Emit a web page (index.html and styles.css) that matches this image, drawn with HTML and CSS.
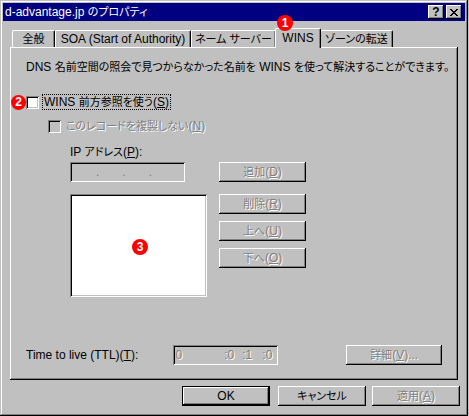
FILE: index.html
```html
<!DOCTYPE html>
<html lang="ja">
<head>
<meta charset="utf-8">
<title>d-advantage.jp のプロパティ</title>
<link rel="stylesheet" href="styles.css">
</head>
<body>
<div class="window">
  <div class="titlebar">
    <span class="title">d-advantage.jp <span class="j">のプロパティ</span></span>
    <span class="tbtn help">?</span>
    <span class="tbtn close"><svg width="8" height="7" viewBox="0 0 8 7"><path d="M0 0h2v1h1v1h2V1h1V0h2v1H7v1H6v1H5v1h1v1h1v1h1v1H6V6H5V5H3v1H2v1H0V6h1V5h1V4h1V3H2V2H1V1H0z" fill="#000"/></svg></span>
  </div>
  <div class="body">
    <div class="tabs">
      <div class="tab w-general"><span class="j">全般</span></div>
      <div class="tab w-soa">SOA (Start of Authority)</div>
      <div class="tab w-ns"><span class="j">ネーム サーバー</span></div>
      <div class="tab active w-wins">WINS</div>
      <div class="tab w-zone"><span class="j">ゾーンの転送</span></div>
    </div>
    <div class="panel">
      <p class="desc">DNS <span class="j">名前空間の照会で見つからなかった名前を</span> WINS <span class="j">を使って解決することができます。</span></p>
      <div class="check-row">
        <span class="checkbox"></span>
        <span class="label focus">WINS <span class="j">前方参照を使う</span>(<u>S</u>)</span>
      </div>
      <div class="check-row sub">
        <span class="checkbox disabled"></span>
        <span class="label dis"><span class="j">このレコードを複製しない</span>(<u>N</u>)</span>
      </div>
      <div class="ip-label">IP <span class="j">アドレス</span>(<u>P</u>):</div>
      <div class="ip-grid">
        <div class="field ip"><span>.</span><span>.</span><span>.</span></div>
        <div class="btn dis"><span class="j">追加</span>(<u>D</u>)</div>
        <div class="listbox"></div>
        <div class="btn-col">
          <div class="btn dis"><span class="j">削除</span>(<u>R</u>)</div>
          <div class="btn dis"><span class="j">上へ</span>(<u>U</u>)</div>
          <div class="btn dis"><span class="j">下へ</span>(<u>O</u>)</div>
        </div>
      </div>
      <div class="ttl-row">
        <span class="ttl-label">Time to live (TTL)(<u>T</u>):</span>
        <div class="field ttl dis"><span class="d0">0</span><span class="d1">:0</span><span class="d2">:1</span><span class="d3">:0</span></div>
        <div class="btn dis wide"><span class="j">詳細</span>(<u>V</u>)...</div>
      </div>
    </div>
    <div class="footer">
      <div class="btn default">OK</div>
      <div class="btn"><span class="j">キャンセル</span></div>
      <div class="btn dis"><span class="j">適用</span>(<u>A</u>)</div>
    </div>
  </div>
  <span class="marker m1">1</span>
  <span class="marker m2">2</span>
  <span class="marker m3">3</span>
</div>
</body>
</html>
```

FILE: styles.css
```css
* { box-sizing: border-box; }
html, body { margin: 0; padding: 0; background: #c0c0c0; }
body {
  font-family: "Liberation Sans", "Noto Sans CJK JP", sans-serif;
  font-size: 12px;
  font-feature-settings: "palt";
  color: #000;
}
.j { font-size: 11px; }
u { text-decoration: underline; text-underline-offset: 1px; }

.window {
  position: relative;
  width: 468px;
  height: 416px;
  padding: 3px;
  background: #c0c0c0;
  box-shadow: inset -1px -1px #000, inset 1px 1px #c0c0c0, inset -2px -2px #808080, inset 2px 2px #fff;
  display: flex;
  flex-direction: column;
}

.titlebar {
  height: 18px;
  background: #000080;
  color: #fff;
  display: flex;
  align-items: center;
  padding: 0 3px 0 2px;
  gap: 2px;
}
.title { flex: 1; line-height: 18px; white-space: nowrap; }
.tbtn {
  width: 16px;
  height: 14px;
  background: #c0c0c0;
  box-shadow: inset -1px -1px #000, inset 1px 1px #fff, inset -2px -2px #808080;
  color: #000;
  display: flex;
  align-items: center;
  justify-content: center;
  font-weight: bold;
  font-size: 12px;
  line-height: 12px;
}
.close svg { display: block; }

.body {
  flex: 1;
  display: flex;
  flex-direction: column;
  padding: 7px 7px 0 7px;
}

.tabs {
  display: flex;
  align-items: flex-end;
  height: 19px;
  padding-left: 2px;
  position: relative;
  z-index: 1;
}
.tab {
  height: 17px;
  border-top: 1px solid #fff;
  border-left: 1px solid #fff;
  border-right: 1px solid #000;
  border-radius: 2px 2px 0 0;
  box-shadow: inset -1px 0 #808080;
  display: flex;
  align-items: center;
  justify-content: center;
  white-space: nowrap;
  line-height: 14px;
  background: #c0c0c0;
}
.w-general { width: 43px; }
.w-soa { width: 136px; }
.w-ns { width: 85px; }
.w-wins { width: 46px; }
.w-zone { width: 73px; }
.tab.active {
  height: 20px;
  margin: 0 -1px -1px -1px;
  align-items: flex-start;
  padding-top: 2px;
  position: relative;
  z-index: 2;
}

.panel {
  width: 448px;
  height: 333px;
  box-shadow: inset -1px -1px #000, inset 1px 1px #fff, inset -2px -2px #808080;
  padding: 13px 16px 15px 16px;
  display: flex;
  flex-direction: column;
}
.desc { margin: 0; line-height: 14px; white-space: nowrap; }

.check-row {
  display: flex;
  align-items: center;
  height: 14px;
  margin-top: 21px;
  gap: 4px;
}
.check-row.sub { margin-top: 10px; padding-left: 22px; }
.checkbox {
  width: 13px;
  height: 13px;
  background: #fff;
  box-shadow: inset 1px 1px #808080, inset -1px -1px #fff, inset 2px 2px #000, inset -2px -2px #c0c0c0;
}
.checkbox.disabled { background: #c0c0c0; }
.label { line-height: 12px; padding: 1px 1px; white-space: nowrap; }
.label.focus { outline: 1px dotted #000; outline-offset: 0; }
.dis { color: #808080; text-shadow: 1px 1px 0 #fff; }

.ip-label { margin-top: 12px; padding-left: 44px; line-height: 14px; }

.ip-grid {
  margin-top: 3px;
  padding-left: 44px;
  display: grid;
  grid-template-columns: 137px 87px;
  column-gap: 12px;
  row-gap: 12px;
  align-items: start;
}
.field {
  height: 20px;
  box-shadow: inset 1px 1px #808080, inset -1px -1px #fff, inset 2px 2px #000, inset -2px -2px #c0c0c0;
  background: #c0c0c0;
}
.field.ip {
  width: 115px;
  display: flex;
  align-items: center;
  padding-left: 26px;
  gap: 23px;
  color: #808080;
  line-height: 12px;
}
.listbox {
  height: 103px;
  background: #fff;
  box-shadow: inset 1px 1px #808080, inset -1px -1px #fff, inset 2px 2px #000, inset -2px -2px #c0c0c0;
}
.btn-col { display: flex; flex-direction: column; gap: 7px; }

.btn {
  height: 20px;
  width: 87px;
  background: #c0c0c0;
  box-shadow: inset -1px -1px #000, inset 1px 1px #fff, inset -2px -2px #808080;
  display: flex;
  align-items: center;
  justify-content: center;
  line-height: 14px;
  white-space: nowrap;
}
.btn.wide { width: 96px; }

.ttl-row {
  margin-top: auto;
  display: flex;
  align-items: center;
  height: 20px;
}
.ttl-label { width: 147px; line-height: 14px; }
.field.ttl {
  width: 106px;
  position: relative;
  display: flex;
  align-items: center;
  line-height: 12px;
  padding-left: 3px;
}
.field.ttl .d1 { margin-left: 42px; }
.field.ttl .d2 { margin-left: 8px; }
.field.ttl .d3 { margin-left: 10px; }
.ttl-row .btn.wide { margin-left: 68px; }

.footer {
  display: flex;
  justify-content: flex-end;
  gap: 6px;
  margin-top: 6px;
  margin-right: -2px;
}
.footer .btn { width: 88px; }
.btn.default {
  box-shadow: inset 0 0 0 1px #000, inset -2px -2px #000, inset 2px 2px #fff, inset -3px -3px #808080;
  margin-right: 2px;
}

.marker {
  position: absolute;
  width: 16px;
  height: 16px;
  border-radius: 50%;
  background: #f00;
  color: #fff;
  font-weight: bold;
  font-size: 12px;
  line-height: 16px;
  text-align: center;
  font-family: "Liberation Sans", sans-serif;
  z-index: 5;
}
.m1 { left: 277px; top: 15px; }
.m2 { left: 11px; top: 95px; width: 15px; height: 15px; line-height: 15px; }
.m3 { left: 132px; top: 239px; }
```
